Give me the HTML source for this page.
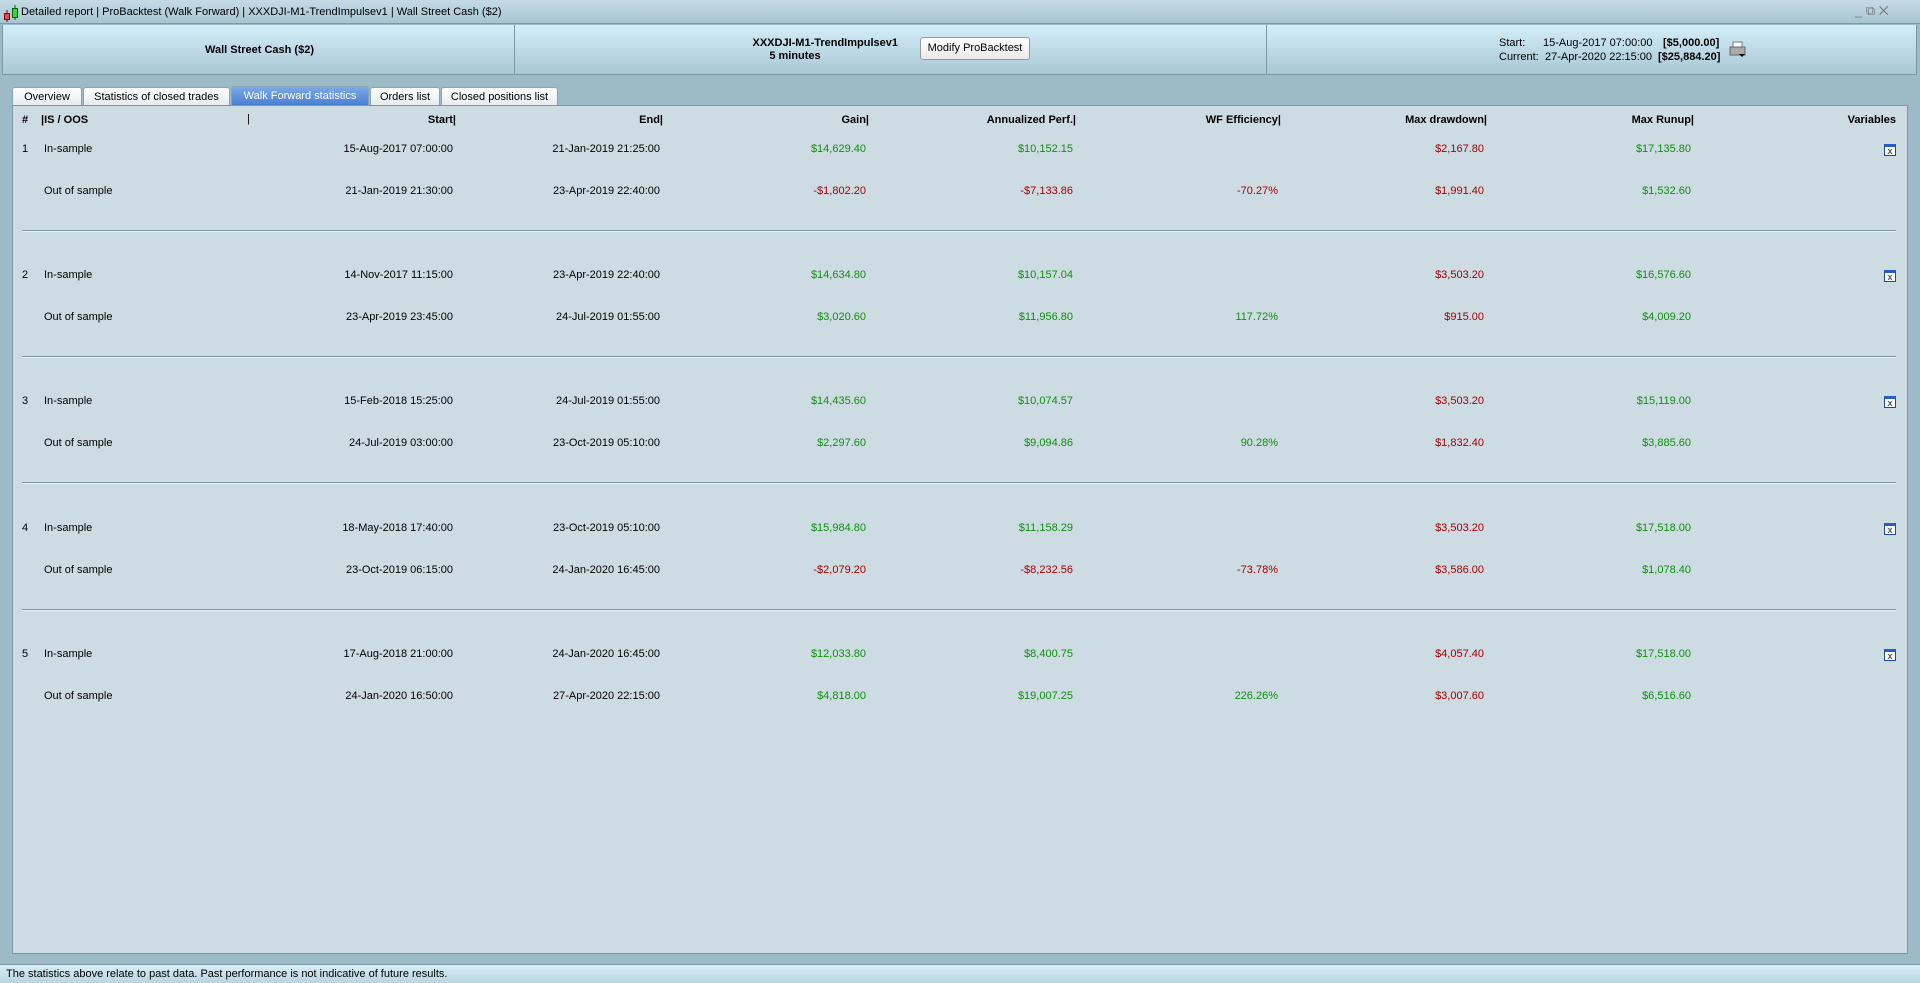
<!DOCTYPE html>
<html><head><meta charset="utf-8"><style>
*{margin:0;padding:0;box-sizing:border-box}
body{width:1920px;height:983px;overflow:hidden;background:#9dbac7;font-family:"Liberation Sans",Arial,sans-serif;font-size:11px;color:#000;position:relative}
.abs{position:absolute}
#title{left:0;top:0;width:1920px;height:24px;background:linear-gradient(#c4dbe5,#a9c5d2);border-bottom:1px solid #7d98a5}
#title span{position:absolute;top:6px;font-size:11px}
.hp{top:25px;height:50px;background:linear-gradient(#d4eef9,#a9c7d4);border-right:1px solid #7d98a5;border-bottom:1px solid #7d98a5}
#panel{left:12px;top:105px;width:1896px;height:849px;background:#cddbe2;border:1px solid #7d98a5}
.tab{top:87px;height:19px;background:linear-gradient(#fff,#e6eaec);border:1px solid #8aa3b0;border-bottom:none;border-radius:3px 3px 0 0;text-align:center;line-height:18px;font-size:11px}
.tab.on{background:linear-gradient(#7aa9ea,#4a80d2);color:#fff;height:19px;top:86px}
.c{position:absolute;white-space:nowrap}
.r{text-align:right}
.h{font-weight:bold;font-size:11px}
.g{color:#0e900e}.d{color:#a80000}
.sep{position:absolute;left:22px;width:1874px;height:2px;border-top:1px solid #7f98a4;border-bottom:1px solid #e4edf1}
.ic{position:absolute;left:1884px;width:12px;height:12px;border:1px solid #1a47b0;background:#fff;border-top:3px solid #2a5cc6;font-size:9px;line-height:8px;text-align:center;font-weight:bold;color:#555}
#status{left:0;top:964px;width:1920px;height:19px;background:linear-gradient(#d8eef7,#b9d4e0);border-top:1px solid #7d98a5}
</style></head><body>
<div id="title" class="abs">
<svg class="abs" style="left:3px;top:4px" width="16" height="18"><line x1="4" y1="6" x2="4" y2="18" stroke="#800"/><rect x="1.5" y="9.5" width="5" height="6" fill="#e05050" stroke="#800"/><line x1="12" y1="1" x2="12" y2="16" stroke="#060"/><rect x="9.5" y="4.5" width="5" height="9" fill="#40d040" stroke="#060"/></svg>
<span style="left:21px">Detailed report | ProBacktest (Walk Forward) | XXXDJI-M1-TrendImpulsev1 | Wall Street Cash ($2)</span>
<span style="left:1855px;top:3px;color:#777;font-size:13px">_ ⧉ ✕</span>
</div>
<div class="abs hp" style="left:2px;width:513px;border-left:1px solid #7d98a5"><div class="c h" style="left:0;width:513px;text-align:center;top:19px">Wall Street Cash ($2)</div></div>
<div class="abs hp" style="left:515px;width:752px">
<div class="c h r" style="left:0;width:383px;top:12px;line-height:13px">XXXDJI-M1-TrendImpulsev1</div>
<div class="c h" style="left:230px;width:100px;text-align:center;top:25px;line-height:13px">5 minutes</div>
<div class="c" style="left:405px;top:12px;width:110px;height:23px;border:1px solid #999;border-radius:3px;background:linear-gradient(#fff,#eaeaea);text-align:center;line-height:21px;font-size:11px">Modify ProBacktest</div>
</div>
<div class="abs hp" style="left:1267px;width:650px">
<div class="c" style="left:232px;top:12px">Start:</div>
<div class="c" style="left:276px;top:12px">15-Aug-2017 07:00:00</div>
<div class="c" style="left:396px;top:12px"><b>[$5,000.00]</b></div>
<div class="c" style="left:232px;top:26px">Current:</div>
<div class="c" style="left:278px;top:26px">27-Apr-2020 22:15:00</div>
<div class="c" style="left:391px;top:26px"><b>[$25,884.20]</b></div>
<svg class="c" style="left:462px;top:16px" width="18" height="17"><rect x="4" y="1" width="9" height="5" fill="#fff" stroke="#777"/><rect x="1" y="6" width="15" height="8" fill="#aaa" stroke="#666"/><path d="M10 13h6l-3 3z" fill="#000"/></svg>
</div>
<div class="abs tab" style="left:12px;width:70px">Overview</div>
<div class="abs tab" style="left:83px;width:147px">Statistics of closed trades</div>
<div class="abs tab on" style="left:231px;width:138px">Walk Forward statistics</div>
<div class="abs tab" style="left:370px;width:70px">Orders list</div>
<div class="abs tab" style="left:441px;width:117px">Closed positions list</div>
<div id="panel" class="abs"></div>
<div class="c h" style="left:22px;top:114px">#</div>
<div class="c h" style="left:41px;top:114px">|IS / OOS</div>
<div class="c" style="left:247px;top:113px">|</div>
<div class="c h r" style="left:300px;width:156px;top:114px">Start|</div>
<div class="c h r" style="left:500px;width:163px;top:114px">End|</div>
<div class="c h r" style="left:700px;width:169px;top:114px">Gain|</div>
<div class="c h r" style="left:900px;width:176px;top:114px">Annualized Perf.|</div>
<div class="c h r" style="left:1100px;width:181px;top:114px">WF Efficiency|</div>
<div class="c h r" style="left:1300px;width:187px;top:114px">Max drawdown|</div>
<div class="c h r" style="left:1500px;width:194px;top:114px">Max Runup|</div>
<div class="c h r" style="left:1700px;width:196px;top:114px">Variables</div>
<div id="rows"></div>
<div id="status" class="abs"><div class="c" style="left:6px;top:3px">The statistics above relate to past data. Past performance is not indicative of future results.</div></div>
<script>
var d=[
["1","15-Aug-2017 07:00:00","21-Jan-2019 21:25:00","$14,629.40","$10,152.15","$2,167.80","$17,135.80","21-Jan-2019 21:30:00","23-Apr-2019 22:40:00","-$1,802.20","-$7,133.86","-70.27%","$1,991.40","$1,532.60"],
["2","14-Nov-2017 11:15:00","23-Apr-2019 22:40:00","$14,634.80","$10,157.04","$3,503.20","$16,576.60","23-Apr-2019 23:45:00","24-Jul-2019 01:55:00","$3,020.60","$11,956.80","117.72%","$915.00","$4,009.20"],
["3","15-Feb-2018 15:25:00","24-Jul-2019 01:55:00","$14,435.60","$10,074.57","$3,503.20","$15,119.00","24-Jul-2019 03:00:00","23-Oct-2019 05:10:00","$2,297.60","$9,094.86","90.28%","$1,832.40","$3,885.60"],
["4","18-May-2018 17:40:00","23-Oct-2019 05:10:00","$15,984.80","$11,158.29","$3,503.20","$17,518.00","23-Oct-2019 06:15:00","24-Jan-2020 16:45:00","-$2,079.20","-$8,232.56","-73.78%","$3,586.00","$1,078.40"],
["5","17-Aug-2018 21:00:00","24-Jan-2020 16:45:00","$12,033.80","$8,400.75","$4,057.40","$17,518.00","24-Jan-2020 16:50:00","27-Apr-2020 22:15:00","$4,818.00","$19,007.25","226.26%","$3,007.60","$6,516.60"]];
var R=[453,660,866,1073,1278,1484,1691];
function cell(x,y,t,cl){return '<div class="c r '+(cl||'')+'" style="left:'+(x-200)+'px;width:200px;top:'+y+'px">'+t+'</div>';}
function cls(v){return v.charAt(0)=='-'?'d':'g';}
var h='';
d.forEach(function(r,i){
 var y=143+i*126.2,y2=y+42;y=Math.round(y);y2=Math.round(y2);
 h+='<div class="c" style="left:22px;top:'+y+'px">'+r[0]+'</div><div class="c" style="left:44px;top:'+y+'px">In-sample</div>';
 h+=cell(R[0],y,r[1])+cell(R[1],y,r[2])+cell(R[2],y,r[3],'g')+cell(R[3],y,r[4],'g')+cell(R[5],y,r[5],'d')+cell(R[6],y,r[6],'g');
 h+='<div class="ic" style="top:'+(y+1)+'px">x</div>';
 h+='<div class="c" style="left:44px;top:'+y2+'px">Out of sample</div>';
 h+=cell(R[0],y2,r[7])+cell(R[1],y2,r[8])+cell(R[2],y2,r[9],cls(r[9]))+cell(R[3],y2,r[10],cls(r[10]))+cell(R[4],y2,r[11],cls(r[11]))+cell(R[5],y2,r[12],'d')+cell(R[6],y2,r[13],'g');
 if(i<4)h+='<div class="sep" style="top:'+Math.round(230+i*126.2)+'px"></div>';
});
document.getElementById('rows').innerHTML=h;
</script>
</body></html>
